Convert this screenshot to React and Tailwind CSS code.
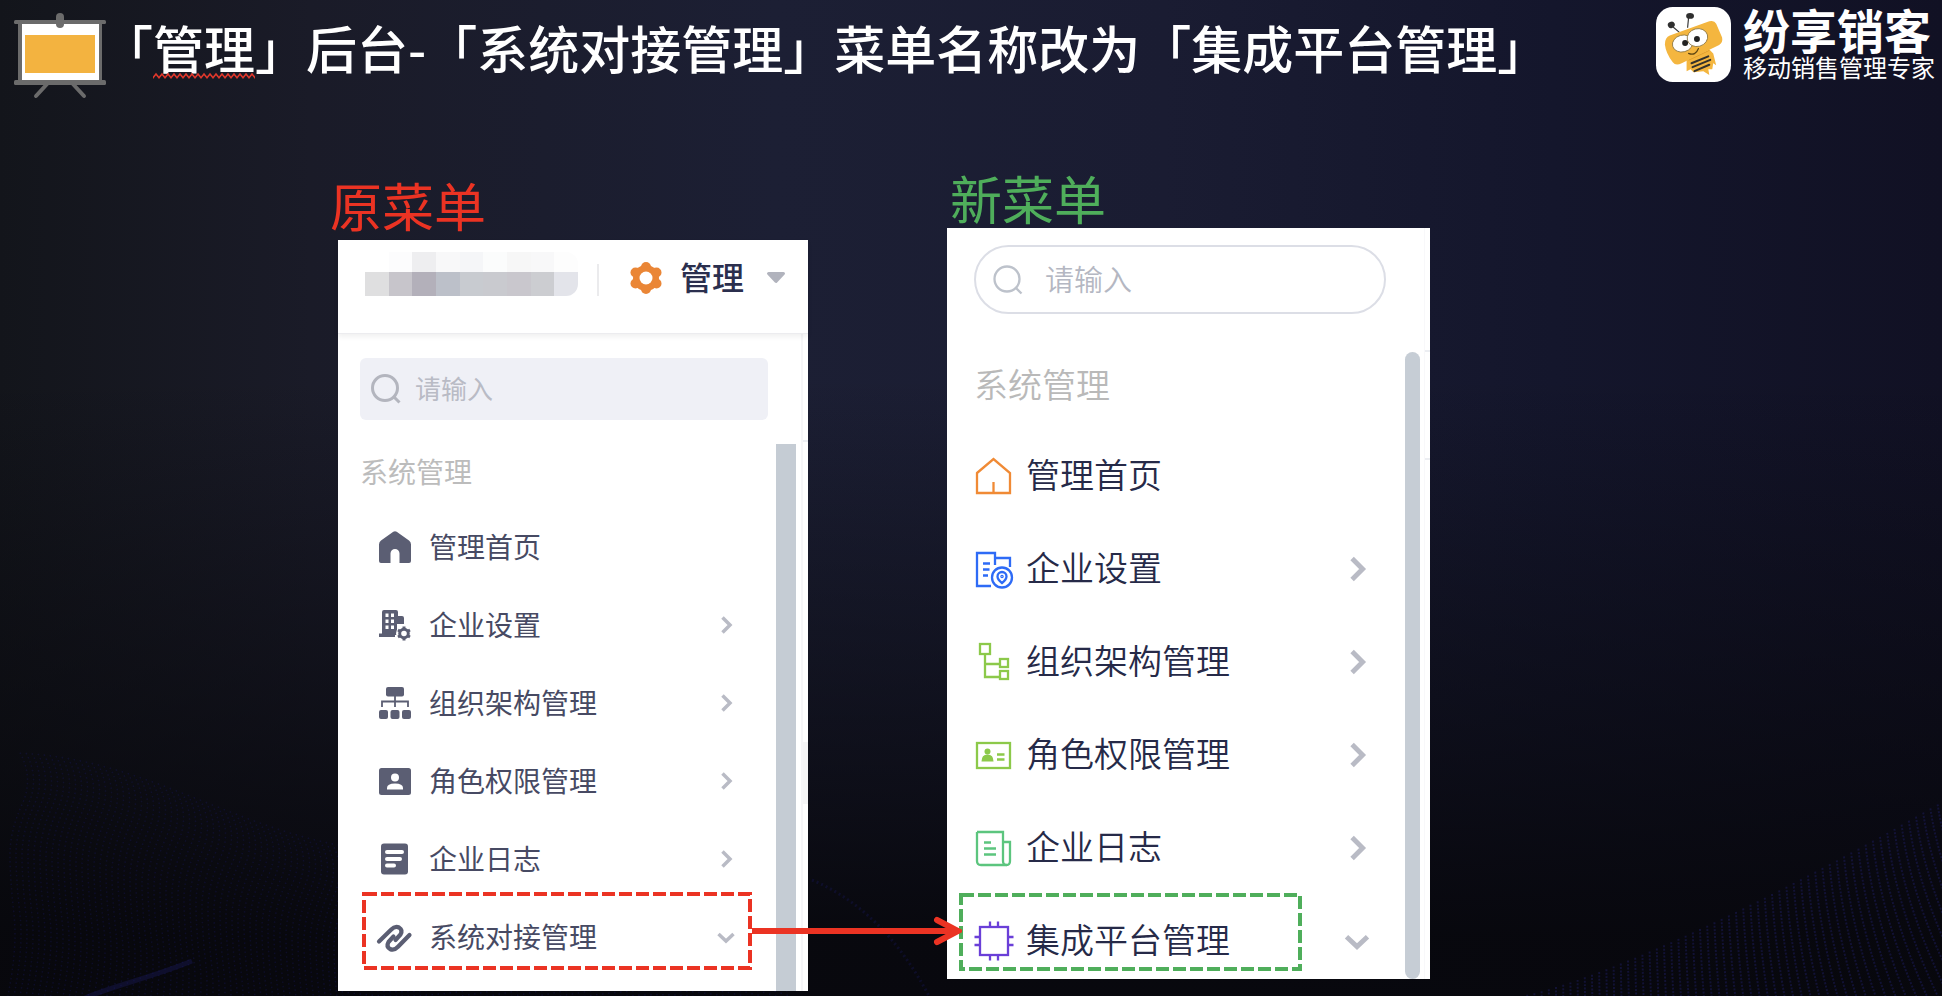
import React from "react";

/* ---------- background ---------- */

function rightWave() {
  const lines = [];
  for (let i = 0; i < 64; i++) {
    const t = i / 60;
    const x = 1520 + i * 7.2;
    const y = 996 - 200 * Math.pow(t, 1.25);
    const bend = 4 + 90 * t * t;
    lines.push(`M${x.toFixed(1)} ${y.toFixed(1)}q${(bend * 0.15).toFixed(1)} 90 ${bend.toFixed(1)} 200`);
  }
  return lines.join("");
}

function leftWaves() {
  const lines = [];
  for (let i = 0; i < 130; i++) {
    const x = 20 + i * 6;
    const y = 750 + 62 * Math.sin((x - 40) / 210) * Math.sin((x - 40) / 210) + x * 0.1;
    lines.push(`M${x} ${y.toFixed(1)}q14 26 2 52t-12 50t4 60t-8 90`);
  }
  return lines.join("");
}

function Backdrop() {
  return (
    <svg
      aria-hidden="true"
      className="pointer-events-none absolute inset-0 h-full w-full"
      viewBox="0 0 1942 996"
      preserveAspectRatio="none"
      fill="none"
    >
      <path d={rightWave()} stroke="#1b1b5c" strokeOpacity="0.5" strokeWidth="2" strokeDasharray="2 1.5" />
      <path d={leftWaves()} stroke="#1c1c66" strokeOpacity="0.3" strokeWidth="1.5" strokeDasharray="1.5 3" />
      <path d="M85 998C115 985 150 978 192 961" stroke="#1c1c66" strokeOpacity="0.35" strokeWidth="5" />
      <path d="M812 880C860 900 900 940 930 998" stroke="#1c1c66" strokeOpacity="0.3" strokeWidth="3" strokeDasharray="2 3" />
    </svg>
  );
}

/* ---------- header drawings ---------- */

function EaselIcon() {
  return (
    <svg width="92" height="86" viewBox="0 0 92 86" aria-hidden="true">
      <path d="M34 70 22 83M58 70 70 83" stroke="#6b6b6b" strokeWidth="4" strokeLinecap="round" />
      <rect x="4" y="9" width="84" height="61" fill="#6b6b6b" />
      <rect x="8" y="11" width="77" height="56" fill="#fff" />
      <rect x="11" y="22" width="70" height="38" fill="#f3b340" />
      <rect x="0" y="7" width="92" height="4" rx="1.5" fill="#6b6b6b" />
      <rect x="0" y="67" width="92" height="5" rx="1.5" fill="#6b6b6b" />
      <rect x="42" y="0" width="8" height="15" rx="4" fill="#6b6b6b" />
    </svg>
  );
}

function BeeLogo() {
  return (
    <svg width="75" height="75" viewBox="0 0 76 76" className="shrink-0" aria-hidden="true">
      <rect width="76" height="76" rx="17" fill="#fff" />
      <path d="M17 20 24 26M33 11 32 21" stroke="#3a3a3a" strokeWidth="1.2" />
      <ellipse cx="15.5" cy="18" rx="3.6" ry="3.2" transform="rotate(-25 15.5 18)" fill="#2f2f2f" />
      <ellipse cx="34.5" cy="9" rx="4" ry="3" fill="#2f2f2f" />
      <path
        d="M14 29 54 14.5Q59 13 61 17L67 31Q68 36 64 38.500L26 57Q20 60 17 56Q10 47 9 38Q9 31 14 29Z"
        fill="#f4b63f"
      />
      <path d="M31 54 54 43 58 47 61 59 58 57 57 63 53 63 54 69 48 65 38 66 35 63 31 65Z" fill="#f4b63f" />
      <path d="M33 54 54 44" stroke="#e0a02f" strokeWidth="1" />
      <g fill="#fff" stroke="#8a7440" strokeWidth="0.8">
        <ellipse cx="27" cy="37" rx="10.500" ry="8.500" transform="rotate(-15 27 37)" />
        <ellipse cx="42" cy="31" rx="10.500" ry="9" transform="rotate(-15 42 31)" />
      </g>
      <circle cx="29.5" cy="36.5" r="3" fill="#222" />
      <circle cx="41.5" cy="32.500" r="3" fill="#222" />
      <path d="M33 47Q40 50 43 42" stroke="#5c4512" strokeWidth="1.2" fill="none" strokeLinecap="round" />
      <path d="M36 57 53 50M37 61 55 53.500M39 65 54 58.500" stroke="#33312b" strokeWidth="2" strokeLinecap="round" />
    </svg>
  );
}

function Squiggle() {
  return (
    <svg className="absolute -bottom-px left-0 h-2 w-full" aria-hidden="true">
      <defs>
        <pattern id="zigzag" width="6" height="8" patternUnits="userSpaceOnUse">
          <path d="M-1 7 3 2 7 7" fill="none" stroke="#e2372b" strokeWidth="1.600" />
        </pattern>
      </defs>
      <rect width="100%" height="8" fill="url(#zigzag)" />
    </svg>
  );
}

/* ---------- original menu icons ---------- */

const SOLID = "#5b5e73";

function OldHome() {
  return (
    <svg width="32" height="32" viewBox="0 0 32 32" aria-hidden="true">
      <path
        d="M14.300 .7Q16-.4 17.700 .7L30 9.500Q32 11 32 13.500V30Q32 32 30 32H20.500V22.500a4.500 4.500 0 0 0-9 0V32H2Q0 32 0 30V13.500Q0 11 2 9.500Z"
        fill={SOLID}
      />
    </svg>
  );
}

function OldBuilding() {
  return (
    <svg width="32" height="32" viewBox="0 0 32 32" aria-hidden="true">
      <path d="M3 3Q3 1 5 1H17Q19 1 19 3V7H23Q25 7 25 9V15H18V26H3Z" fill={SOLID} />
      <path d="M0 24.500H16V28H0Z" fill={SOLID} />
      <path
        d="M6.500 4.500h3v3.500h-3zM12 4.500h3v3.500h-3zM6.500 10.500h3v3.500h-3zM12 10.500h3v3.500h-3zM6.500 16.500h3v3.500h-3zM12 16.500h3v3.500h-3z"
        fill="#fff"
      />
      <circle cx="25" cy="24.500" r="8" fill="#fff" />
      <circle cx="25" cy="24.500" r="4.300" fill="none" stroke={SOLID} strokeWidth="3" />
      <path
        d="M25 17.500v2.500M25 29v2.500M19 21l2.200 1.200M28.800 26.800 31 28M31 21l-2.200 1.200M21.200 26.800 19 28"
        stroke={SOLID}
        strokeWidth="3"
      />
    </svg>
  );
}

function OldOrg() {
  return (
    <svg width="32" height="32" viewBox="0 0 32 32" aria-hidden="true">
      <rect x="7" y="0" width="18" height="9.500" rx="2" fill={SOLID} />
      <path d="M16 9V20M3 20V14.500H29V20" fill="none" stroke={SOLID} strokeWidth="1.800" />
      <rect x="0" y="23" width="9" height="9" rx="2" fill={SOLID} />
      <rect x="11.500" y="23" width="9" height="9" rx="2" fill={SOLID} />
      <rect x="23" y="23" width="9" height="9" rx="2" fill={SOLID} />
    </svg>
  );
}

function OldRole() {
  return (
    <svg width="32" height="32" viewBox="0 0 32 32" aria-hidden="true">
      <rect x="0" y="3" width="32" height="27" rx="2.500" fill={SOLID} />
      <circle cx="16" cy="12.500" r="4" fill="#fff" />
      <path d="M8 24.500V23Q8 18.500 16 18.500T24 23V24.500Z" fill="#fff" />
    </svg>
  );
}

function OldLog() {
  return (
    <svg width="32" height="32" viewBox="0 0 32 32" aria-hidden="true">
      <rect x="2" y="0.500" width="27" height="31" rx="3" fill={SOLID} />
      <path d="M8 9H23M8 16H21M8 22.500H15" stroke="#fff" strokeWidth="4" strokeLinecap="round" />
    </svg>
  );
}

function OldLink() {
  return (
    <svg width="32" height="32" viewBox="0 0 32 32" className="overflow-visible" aria-hidden="true">
      <g fill="none" stroke={SOLID} strokeWidth="4.200" strokeLinecap="round" strokeLinejoin="round">
        <path d="M0 20.500 12 8.800Q16 4.500 20 6.500Q24 9 21.500 13.500L16.500 19" />
        <path d="M30.500 14 19 25.800Q15 30 11 28Q7 25.500 9.500 21L14.500 15.500" />
      </g>
    </svg>
  );
}

/* ---------- new menu icons ---------- */

function NewIcon({ color, children }) {
  return (
    <svg width="40" height="40" viewBox="0 0 40 40" fill="none" stroke={color} strokeWidth="2.300" aria-hidden="true">
      {children}
    </svg>
  );
}

function NewHome() {
  return (
    <NewIcon color="#f08a35">
      <path d="M3 17 19.500 3 36 17V37H3Z" />
      <path d="M19.500 37V26" />
    </NewIcon>
  );
}

function NewBuilding() {
  return (
    <NewIcon color="#2e6bf6">
      <path d="M17 37H3V4H21V16M21 9H36V18" />
      <path d="M9 14.500H16M9 20.500H15.500M9 26.500H14" />
      <circle cx="28" cy="28.500" r="10" />
      <path d="M28 34Q23.500 30.500 23.500 27.500A4.500 4.500 0 0 1 32.500 27.500Q32.500 30.500 28 34Z" />
      <circle cx="28" cy="27.500" r="0.600" />
    </NewIcon>
  );
}

function NewOrg() {
  return (
    <NewIcon color="#8cc94a">
      <rect x="6" y="2" width="10" height="10" />
      <rect x="26" y="17" width="8" height="8" />
      <rect x="26" y="29" width="8" height="8" />
      <path d="M11 12V35H26M11 22H26" />
    </NewIcon>
  );
}

function NewRole() {
  return (
    <NewIcon color="#8cc94a">
      <rect x="3" y="8" width="33" height="25" />
      <g fill="#8cc94a" stroke="none">
        <circle cx="13.500" cy="16.500" r="3" />
        <path d="M7.500 26.500Q7.500 19.500 13.500 19.500T19.500 26.500Z" />
      </g>
      <path d="M23 19.500H30.500M23 24.500H30.500" />
    </NewIcon>
  );
}

function NewLog() {
  return (
    <NewIcon color="#5cc57e">
      <path d="M3 4H29V33Q29 37 32.500 37T36 33V14H29" />
      <path d="M3 4V33Q3 37 7 37H32.500" />
      <path d="M10 14.500H17M10 20.500H22M10 26.500H22" />
    </NewIcon>
  );
}

function NewChip() {
  return (
    <NewIcon color="#6a3fd8">
      <rect x="6" y="6" width="28" height="28" />
      <path d="M16 0.500V6M24 0.500V6M16 34V39.500M24 34V39.500M0.500 16H6M0.500 24H6M34 16H39.500M34 24H39.500" />
    </NewIcon>
  );
}

/* ---------- shared bits ---------- */

function Chevron({ down, size, width }) {
  return (
    <svg width={size} height={size} viewBox="0 0 20 20" className="ml-auto shrink-0" aria-hidden="true">
      <path
        d={down ? "M2.500 7 10 14 17.500 7" : "M6.500 2.500 14 10 6.500 17.500"}
        fill="none"
        stroke="#b9bbc5"
        strokeWidth={width}
      />
    </svg>
  );
}

function Magnifier({ stroke, width, className }) {
  return (
    <svg width="30" height="30" viewBox="0 0 30 30" className={className} fill="none" stroke={stroke} aria-hidden="true">
      <circle cx="14" cy="14" r="12.500" strokeWidth={width} />
      <path d="M23 23 28.500 28.500" strokeWidth={width} />
    </svg>
  );
}

function DashedBox({ color }) {
  return (
    <svg className="h-full w-full" aria-hidden="true">
      <rect
        x="2"
        y="2"
        className="h-[calc(100%-4px)] w-[calc(100%-4px)]"
        fill="none"
        stroke={color}
        strokeWidth="4"
        strokeDasharray="13 4"
      />
    </svg>
  );
}

const oldItems = [
  { label: "管理首页", Icon: OldHome },
  { label: "企业设置", Icon: OldBuilding, arrow: "right" },
  { label: "组织架构管理", Icon: OldOrg, arrow: "right" },
  { label: "角色权限管理", Icon: OldRole, arrow: "right" },
  { label: "企业日志", Icon: OldLog, arrow: "right" },
  { label: "系统对接管理", Icon: OldLink, arrow: "down", marked: true },
];

const newItems = [
  { label: "管理首页", Icon: NewHome },
  { label: "企业设置", Icon: NewBuilding, arrow: "right" },
  { label: "组织架构管理", Icon: NewOrg, arrow: "right" },
  { label: "角色权限管理", Icon: NewRole, arrow: "right" },
  { label: "企业日志", Icon: NewLog, arrow: "right" },
  { label: "集成平台管理", Icon: NewChip, arrow: "down", marked: true },
];

const mosaicTop = ["bg-white", "bg-[#fcfcfd]", "bg-[#eeeef0]", "bg-[#f8f8f9]", "bg-[#f5f6f8]", "bg-[#fbfcfc]", "bg-[#f7f7f7]", "bg-[#f8f8f9]", "bg-[#fdfdfd]"];
const mosaicBottom = ["bg-[#dfdfe0]", "bg-[#c7c5cb]", "bg-[#b3b0ba]", "bg-[#bcc0c9]", "bg-[#c8cbd0]", "bg-[#c9cacf]", "bg-[#c9c7cd]", "bg-[#cccdd1]", "bg-[#e3e4ea]"];

function OldPanel() {
  return (
    <div className="w-[470px] bg-white">
      <div className="relative z-10 flex h-[94px] items-start border-b border-[#ececef] pt-3 pl-[27px] shadow-[0_3px_5px_rgba(0,0,0,0.06)]">
        <div className="w-[213px] overflow-hidden rounded-r-xl">
          <div className="grid h-5 grid-cols-9">
            {mosaicTop.map((c, i) => (
              <span key={i} className={c} />
            ))}
          </div>
          <div className="grid h-6 grid-cols-9">
            {mosaicBottom.map((c, i) => (
              <span key={i} className={c} />
            ))}
          </div>
        </div>
        <div className="mt-3 ml-[19px] h-8 w-[2px] bg-[#ebebed]" />
        <button type="button" className="mt-1.5 ml-[31px] flex h-10 items-center">
          <svg width="32" height="32" viewBox="0 0 32 32" aria-hidden="true">
            <g fill="#ea8636">
              <circle cx="16" cy="16" r="13" />
              <circle cx="16" cy="5" r="5" />
              <circle cx="16" cy="27" r="5" />
              <circle cx="5.500" cy="10.500" r="5" />
              <circle cx="26.500" cy="10.500" r="5" />
              <circle cx="5.500" cy="21.500" r="5" />
              <circle cx="26.500" cy="21.500" r="5" />
            </g>
            <circle cx="16" cy="16" r="6.500" fill="#fff" />
          </svg>
          <span className="ml-[18px] pb-1 text-[32px] leading-10 font-medium text-[#2b2f4e]">管理</span>
          <svg width="20" height="12" viewBox="0 0 20 12" className="ml-[22px]" aria-hidden="true">
            <path d="M2.500 1.500H17.500L10 9.500Z" fill="#b1b3bd" stroke="#b1b3bd" strokeWidth="3" strokeLinejoin="round" />
          </svg>
        </button>
      </div>
      <div className="flex">
        <div className="flex-1 pt-6 pl-[22px]">
          <label className="mr-2 flex h-[62px] items-center rounded-md bg-[#eff0f6] pl-[11px]">
            <Magnifier stroke="#b3b5be" width="3" className="shrink-0" />
            <span className="sr-only">搜索菜单</span>
            <input
              type="text"
              placeholder="请输入"
              className="ml-3.5 h-12 w-full bg-transparent pb-1 text-[26px] outline-none placeholder:text-[#b9bbc5]"
            />
          </label>
          <h3 className="mt-[31px] text-[28px] leading-10 text-[#bcbcbc]">系统管理</h3>
          <nav aria-label="原菜单" className="pt-8 pr-10 pb-[30px] pl-[19px]">
            <ul className="flex flex-col gap-[30px]">
              {oldItems.map(({ label, Icon, arrow, marked }) => (
                <li key={label} className="relative">
                  <button type="button" className="flex h-12 w-full items-center text-[28px] leading-10 text-[#474a63]">
                    <Icon />
                    <span className="ml-[18px] pb-0.5">{label}</span>
                    {arrow && <Chevron down={arrow === "down"} size="20" width="3.500" />}
                  </button>
                  {marked && (
                    <div className="pointer-events-none absolute -top-[21px] -right-4 -left-[17px] z-20 h-[78px]">
                      <DashedBox color="#eb3323" />
                      <svg
                        className="absolute top-6 left-full"
                        width="210"
                        height="30"
                        viewBox="0 0 210 30"
                        fill="none"
                        stroke="#eb3323"
                        strokeWidth="6"
                        strokeLinecap="round"
                        aria-hidden="true"
                      >
                        <path d="M-4 15H203" />
                        <path d="M185 4 206 15 185 26" />
                      </svg>
                    </div>
                  )}
                </li>
              ))}
            </ul>
          </nav>
        </div>
        <div className="mt-[110px] w-5 bg-[#c5ccd4]" />
        <div className="ml-[5px] flex w-[7px] flex-col border-l-2 border-[#f6f6f8]">
          <div className="h-[108px] border-b-2 border-[#eceef2]" />
          <div className="mt-[300px] h-[62px] bg-[#f5f5f6]" />
        </div>
      </div>
    </div>
  );
}

function NewPanel() {
  return (
    <div className="flex w-[483px] bg-white">
      <div className="flex-1 pt-[17px] pl-[27px]">
        <label className="mr-[19px] flex h-[69px] items-center rounded-full border-2 border-[#dcdee6] pl-[17px]">
          <Magnifier stroke="#bdc2cb" width="2.300" className="shrink-0" />
          <span className="sr-only">搜索菜单</span>
          <input
            type="text"
            placeholder="请输入"
            className="ml-[22px] h-12 w-full bg-transparent pb-1 text-[29px] font-[350] outline-none placeholder:text-[#b4b7c2]"
          />
        </label>
        <h3 className="mt-[46px] text-[34px] leading-12 font-[350] text-[#b9b9b9]">系统管理</h3>
        <nav aria-label="新菜单" className="pt-[42px] pr-[34px] pb-3">
          <ul className="flex flex-col gap-[41px]">
            {newItems.map(({ label, Icon, arrow, marked }) => (
              <li key={label} className="relative">
                <button type="button" className="flex h-[52px] w-full items-center text-[34px] leading-12 font-[350] text-[#262a48]">
                  <Icon />
                  <span className="ml-3 pb-1">{label}</span>
                  {arrow && <Chevron down={arrow === "down"} size="28" width="3.500" />}
                </button>
                {marked && (
                  <div className="pointer-events-none absolute -top-[22px] -left-[15px] h-[78px] w-[343px]">
                    <DashedBox color="#4fae5b" />
                  </div>
                )}
              </li>
            ))}
          </ul>
        </nav>
      </div>
      <div className="mt-[124px] w-[15px] rounded-full bg-[#c6cdd5]" />
      <div className="ml-1 flex w-[6px] flex-col border-l border-[#f8f8fa]">
        <div className="h-[124px] border-b-2 border-[#eceef2]" />
        <div className="h-[108px] border-b-2 border-[#eceef2]" />
      </div>
    </div>
  );
}

export default function App() {
  return (
    <div className="relative min-h-screen overflow-hidden bg-[linear-gradient(to_bottom,rgba(7,7,12,0)_38%,rgba(7,7,12,0.5)_68%,rgba(7,7,12,0.95)_94%),linear-gradient(to_right,#13151b_0%,#1a1b28_16%,#1c1f34_40%,#1a1c32_60%,#14162c_80%,#111124_100%)] font-['Noto_Sans_CJK_SC',sans-serif]">
      <Backdrop />
      <header className="relative flex items-start justify-between pt-[7px] pr-[7px] pl-3.5">
        <div className="flex items-start">
          <div className="mt-1.5">
            <EaselIcon />
          </div>
          <h1 className="mt-2 -ml-1 text-[51px] leading-[64px] font-medium whitespace-nowrap text-white">
            「
            <span className="relative inline-block">
              管理
              <Squiggle />
            </span>
            」后台-「系统对接管理」菜单名称改为「集成平台管理」
          </h1>
        </div>
        <div className="flex shrink-0 items-start gap-3">
          <BeeLogo />
          <div className="text-white">
            <p className="text-[47px] leading-11 font-bold">纷享销客</p>
            <p className="mt-1 text-[24px] leading-6">移动销售管理专家</p>
          </div>
        </div>
      </header>
      <main className="relative flex items-start gap-[139px] pt-[73px] pb-1 pl-[17.4%]">
        <section className="relative z-10 mt-[7px]">
          <h2 className="mb-[9px] -ml-2 text-[52px] leading-[52px] text-[#eb3323]">原菜单</h2>
          <OldPanel />
        </section>
        <section>
          <h2 className="mb-1 ml-[3px] text-[52px] leading-[52px] text-[#4fae5b]">新菜单</h2>
          <NewPanel />
        </section>
      </main>
    </div>
  );
}
